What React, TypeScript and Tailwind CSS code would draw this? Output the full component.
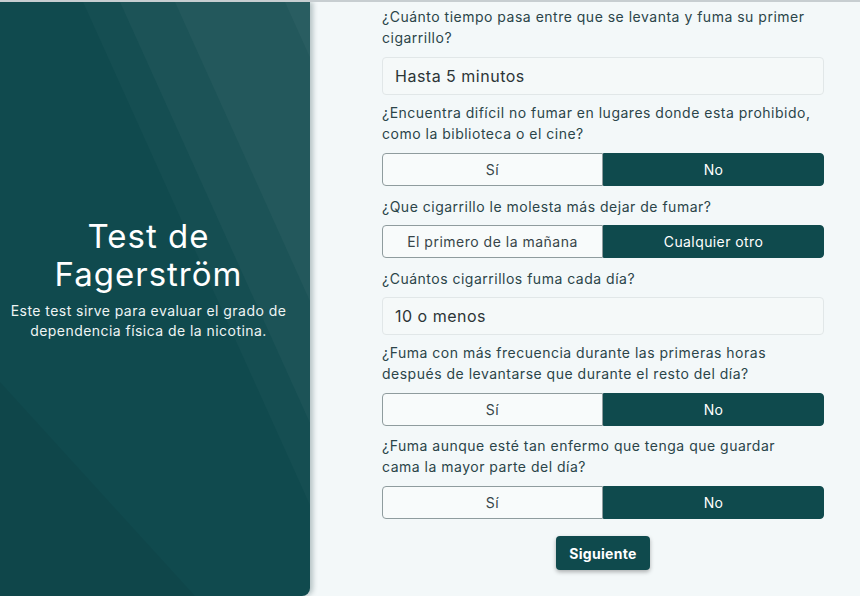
import React, { useState } from "react";

const font = { fontFamily: "Inter, 'Open Sans', sans-serif" };

function Toggle({ left, right }: { left: string; right: string }) {
  const [value, setValue] = useState(right);
  return (
    <div className="flex h-[33px] w-full">
      {[left, right].map((opt, i) => (
        <button
          key={opt}
          onClick={() => setValue(opt)}
          className={
            (value === opt
              ? "bg-[#0f4a4d] text-white text-[14px] tracking-[0.4px] border-[#0f4a4d] "
              : "bg-[#f8fbfb] text-[#374549] text-[14px] tracking-[0.5px] border-[#8f9c9e] ") +
            (i === 0 ? "rounded-l-[4px] " : "rounded-r-[4px] ") +
            "flex-1 border flex items-center justify-center"
          }
        >
          {opt}
        </button>
      ))}
    </div>
  );
}

function Question({ children }: { children: React.ReactNode }) {
  return (
    <p className="text-[14px] leading-[21px] tracking-[0.5px] text-[#2b4549]">{children}</p>
  );
}

function Field({ value }: { value: string }) {
  return (
    <div className="h-[38px] w-full rounded-[4px] border border-[#e1e7e8] bg-[#f5f9f9] px-3 flex items-center text-[16px] tracking-[0.5px] text-[#2c3537]">
      {value}
    </div>
  );
}

export default function App() {
  return (
    <div
      className="w-[860px] h-[596px] flex overflow-hidden bg-[#f3f8f9] border-t-2 border-[#c7ced1]"
      style={font}
    >
      {/* left panel */}
      <div className="relative w-[310px] h-full shrink-0 bg-[#104a4e] rounded-br-[8px] overflow-hidden shadow-[3px_0_5px_rgba(0,40,45,0.25)] z-10">
        <svg className="absolute inset-0" width="310" height="594" viewBox="0 0 310 594">
          <polygon points="83,0 400,0 400,594 351,594" fill="#ffffff" opacity="0.025" />
          <polygon points="120,0 400,0 400,594 388,594" fill="#ffffff" opacity="0.03" />
          <polygon points="175,0 460,0 460,594 443,594" fill="#ffffff" opacity="0.03" />
          <polygon points="285,0 560,0 560,594 553,594" fill="#ffffff" opacity="0.03" />
          <polygon points="0,380 195,594 0,594" fill="#000000" opacity="0.05" />
        </svg>
        <div className="relative h-full flex flex-col items-center justify-center pr-[13px] pb-[40px] text-center text-white">
          <h1 className="text-[33px] leading-[38px] tracking-[1px]">
            Test de
            <br />
            Fagerström
          </h1>
          <p className="mt-[8px] text-[14px] leading-[20px] tracking-[0.45px] text-[#eef4f4]">
            Este test sirve para evaluar el grado de
            <br />
            dependencia física de la nicotina.
          </p>
        </div>
      </div>

      {/* form */}
      <div className="flex-1 pl-[72px] pr-[36px] pt-[4px]">
        <div className="w-[442px] flex flex-col">
          <Question>
            ¿Cuánto tiempo pasa entre que se levanta y fuma su primer
            <br />
            cigarrillo?
          </Question>
          <div className="mt-[9px]">
            <Field value="Hasta 5 minutos" />
          </div>
          <div className="mt-[7px]">
            <Question>
              ¿Encuentra difícil no fumar en lugares donde esta prohibido,
              <br />
              como la biblioteca o el cine?
            </Question>
          </div>
          <div className="mt-[9px]">
            <Toggle left="Sí" right="No" />
          </div>
          <div className="mt-[10px]">
            <Question>¿Que cigarrillo le molesta más dejar de fumar?</Question>
          </div>
          <div className="mt-[8px]">
            <Toggle left="El primero de la mañana" right="Cualquier otro" />
          </div>
          <div className="mt-[10px]">
            <Question>¿Cuántos cigarrillos fuma cada día?</Question>
          </div>
          <div className="mt-[8px]">
            <Field value="10 o menos" />
          </div>
          <div className="mt-[7px]">
            <Question>
              ¿Fuma con más frecuencia durante las primeras horas
              <br />
              después de levantarse que durante el resto del día?
            </Question>
          </div>
          <div className="mt-[9px]">
            <Toggle left="Sí" right="No" />
          </div>
          <div className="mt-[9px]">
            <Question>
              ¿Fuma aunque esté tan enfermo que tenga que guardar
              <br />
              cama la mayor parte del día?
            </Question>
          </div>
          <div className="mt-[9px]">
            <Toggle left="Sí" right="No" />
          </div>
          <div className="mt-[17px] flex justify-center">
            <button className="h-[34px] px-[13px] rounded-[4px] bg-[#0f4a4d] text-white text-[14px] font-bold tracking-[0.3px] shadow-[0_2px_4px_rgba(0,0,0,0.3)]">
              Siguiente
            </button>
          </div>
        </div>
      </div>
    </div>
  );
}
